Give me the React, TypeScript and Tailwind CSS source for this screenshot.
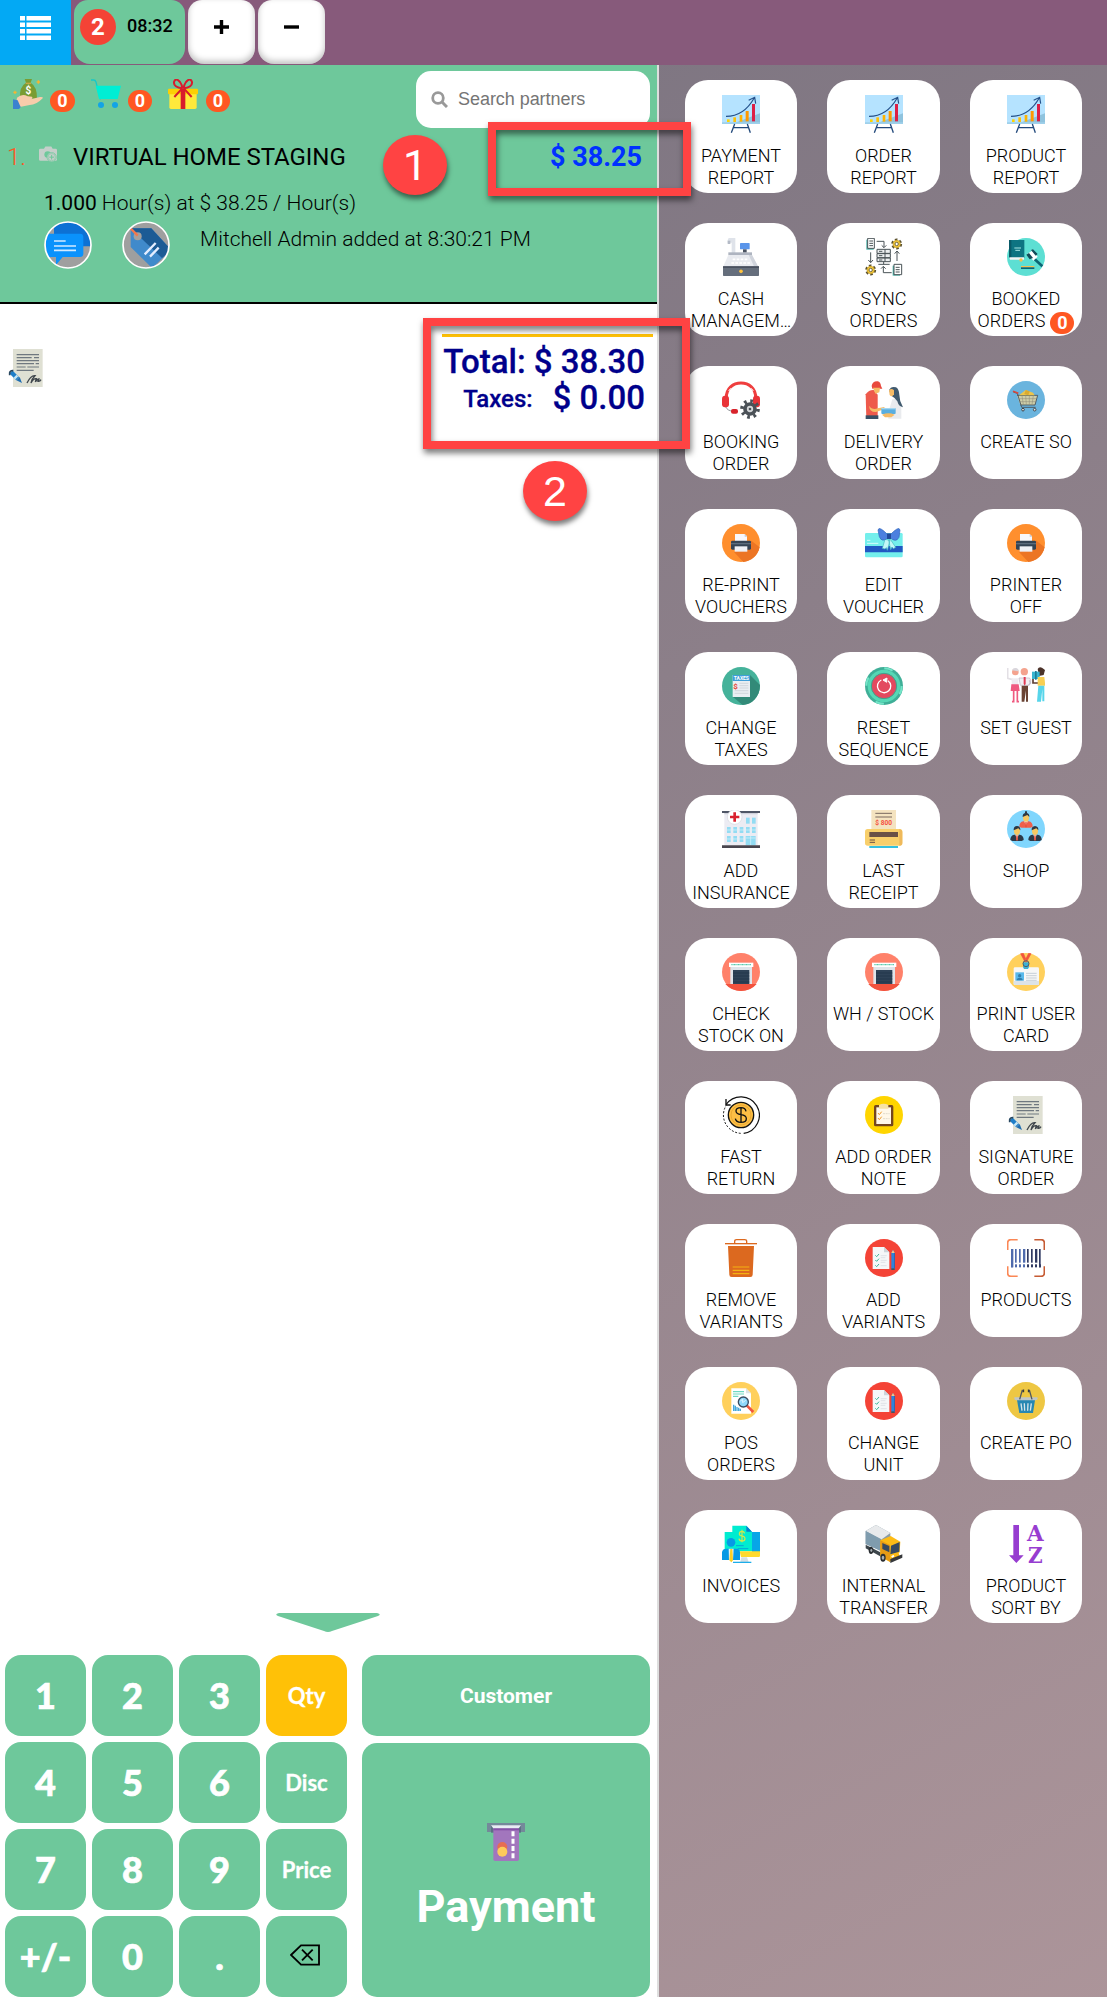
import React from "react";

type P = { children?: React.ReactNode; className?: string };

const Ico = ({ children, className = "h-[38px] w-[38px]" }: P) => (
  <svg viewBox="0 0 114 114" className={className} fill="none">
    {children}
  </svg>
);

const Chart = () => (
  <Ico>
    <rect x="0" y="0" width="114" height="87" fill="#b5e3ff" />
    <path d="M114 55v32H30z" fill="#8fc3de" />
    <path d="M0 82h114v5H0z" fill="#9fd0ea" />
    <rect x="15" y="73" width="8" height="8" fill="#ffd400" />
    <rect x="34" y="67" width="8" height="14" fill="#ffc107" />
    <rect x="53" y="60" width="8" height="20" fill="#ffb300" />
    <rect x="71" y="48" width="9" height="31" fill="#ff9800" />
    <rect x="90" y="27" width="9" height="52" fill="#dc1f45" />
    <path d="M12 64C50 64 78 42 97 8M80 16l18-9 3 19" stroke="#23508a" strokeWidth="3.5" />
    <path d="M38 87L28 113M76 87l9 26M34 98h46" stroke="#234a7c" strokeWidth="4" />
  </Ico>
);

const CashRegister = () => (
  <Ico>
    <path d="M20 0h20v50H29V14H17v-8z" fill="#dfe3ea" />
    <path d="M17 8h8v10h-8z" fill="#b4bac6" />
    <rect x="54" y="15" width="29" height="19" rx="2" fill="#5a95ea" />
    <rect x="63" y="34" width="11" height="10" fill="#4a5260" />
    <path d="M19 43h71v8H19z" fill="#aeb4c0" />
    <path d="M19 51h71l18 34H4z" fill="#e9ebf0" />
    <path d="M90 51l18 34H96L80 51z" fill="#d0d4dc" />
    <path d="M32 64h48M28 75h56" stroke="#fff" strokeWidth="5" strokeDasharray="8 4" />
    <rect x="3" y="85" width="108" height="29" rx="2" fill="#656e7c" />
    <path d="M3 85h108v5H3z" fill="#4a5260" />
    <circle cx="57" cy="100" r="5.500" fill="#ffc33d" />
  </Ico>
);

const Gear = ({ x, y }: { x: number; y: number }) => (
  <g transform={`translate(${x} ${y})`}>
    <circle r="12" stroke="#5b5230" strokeWidth="9" strokeDasharray="7 5.560" />
    <circle r="11" fill="#f3c93c" stroke="#c79b23" strokeWidth="2" />
    <circle r="5" fill="#fff" stroke="#5b5230" strokeWidth="2.500" />
  </g>
);

const Sync = () => (
  <Ico>
    <path d="M4 5h22v30H4z" fill="#49b3a8" />
    <path d="M8 1h20v30H8z" fill="#fff" stroke="#4a5357" strokeWidth="3" />
    <path d="M13 9h11M13 16h11M13 23h11" stroke="#4a5357" strokeWidth="3" />
    <path d="M83 83h22v30H83z" fill="#49b3a8" />
    <path d="M87 79h23v31H87z" fill="#fff" stroke="#4a5357" strokeWidth="3" />
    <path d="M92 88h12M92 95h12M92 102h12" stroke="#4a5357" strokeWidth="3" />
    <Gear x={95} y={18} />
    <Gear x={17} y={96} />
    <path d="M36 34h40v12H36zM36 47h40v12H36zM36 60h40v11H36z" fill="#eceff0" stroke="#4a5357" strokeWidth="3" />
    <path d="M42 40h10M42 53h10M42 66h10M60 34v37M56 71v8M40 79h34" stroke="#4a5357" strokeWidth="3" />
    <path d="M35 10h22v18M50 22l7 7 7-7M17 43v30M10 66l7 8 7-8M96 69V40M89 47l7-8 7 8M80 104H55V86M48 92l7-7 7 7" stroke="#4a5357" strokeWidth="3" />
  </Ico>
);

const Booked = () => (
  <Ico>
    <circle cx="57" cy="57" r="57" fill="#5ddfd3" />
    <path d="M6 6h46v54H6z" fill="#0d7482" />
    <path d="M6 6h7v54H6z" fill="#095a68" />
    <path d="M22 30h20M25 37h14" stroke="#a6e6e4" strokeWidth="3" />
    <path d="M7 58h44v7H9z" fill="#f2f5f5" />
    <circle cx="42" cy="66" r="5" fill="#f5bd4f" />
    <path d="M76 57l30 28" stroke="#0d6474" strokeWidth="8" />
    <path d="M61 48l14-10 17 18-13 12z" fill="#fff" />
    <path d="M58 50l10 14 10-4-12-15zM72 36l14 17 6-5-14-14z" fill="#134c59" />
    <path d="M42 84h40v4H42z" fill="#f5bd4f" />
    <path d="M42 88h40v5H42z" fill="#0d6474" />
  </Ico>
);

const Headset = () => (
  <Ico>
    <path d="M13 52C10-9 104-9 101 52" stroke="#ef3e3e" strokeWidth="9" />
    <path d="M20 30L26 22M94 30L88 22" stroke="#fff" strokeWidth="3" />
    <path d="M10 76c5 10 12 14 22 14" stroke="#8d9296" strokeWidth="3" />
    <rect x="0" y="44" width="21" height="35" rx="9" fill="#e93338" />
    <rect x="93" y="44" width="21" height="35" rx="9" fill="#e93338" />
    <rect x="27" y="84" width="21" height="14" rx="6" fill="#d8232b" />
    <circle cx="84" cy="84" r="24" stroke="#4b5157" strokeWidth="11" strokeDasharray="8 10.850" />
    <circle cx="84" cy="84" r="15" stroke="#4b5157" strokeWidth="11" fill="#d5d8da" />
    <circle cx="84" cy="84" r="4" fill="#4b5157" />
  </Ico>
);

const Delivery = () => (
  <Ico>
    <path d="M2 40q10-14 24-13l12 14v72H4z" fill="#ee5a4c" />
    <path d="M2 103h38v11H2z" fill="#395066" />
    <path d="M12 74q10 14 26 8l20-4 1 6-26 9Q14 94 12 74z" fill="#f6bb66" />
    <path d="M20 15q2-15 18-14 9 2 10 14l4 8H22z" fill="#e94a3e" />
    <path d="M24 20h21l-2 14-12 4z" fill="#f6bb66" />
    <path d="M82 55q24-8 27 18v40H70V94z" fill="#e9ebee" />
    <path d="M72 28q6-14 21-9 9 5 10 22 0 19 11 38-13-2-17-18-8-12-18-17z" fill="#405a6e" />
    <path d="M72 28q7-8 15 0v12q-7 10-13 2z" fill="#f6bb66" />
    <rect x="49" y="81" width="43" height="18" rx="3" fill="#59aee0" />
    <path d="M51 101q20-8 38 0l-10 8H60z" fill="#f6bb66" />
    <path d="M49 81h43v4H49z" fill="#a4d6ef" />
  </Ico>
);

const CreateSO = () => (
  <Ico>
    <circle cx="57" cy="57" r="57" fill="#6ab4de" />
    <path d="M30 43l10 29h44l8-29z" fill="#f0d796" fillOpacity=".75" />
    <path d="M19 33l12 4 13 42h42M30 43h62L84 72H40" stroke="#4b565e" strokeWidth="2.800" />
    <path d="M34 53h54M38 62h49M45 44l4 27M56 44l2 27M67 44v27M79 44l-4 27" stroke="#8d8a78" strokeWidth="1.600" />
    <path d="M36 43l20-16 22 8 5 8z" fill="#ecc54a" />
    <path d="M56 27l12 4-4 12-12-4z" fill="#d9aa31" />
    <path d="M18 31l16 6" stroke="#d6473b" strokeWidth="5" />
    <circle cx="48" cy="86" r="4" fill="#e6e6e6" stroke="#3e474e" strokeWidth="3" />
    <circle cx="83" cy="86" r="4" fill="#e6e6e6" stroke="#3e474e" strokeWidth="3" />
  </Ico>
);

const Printer = () => (
  <Ico>
    <circle cx="57" cy="57" r="57" fill="#ff8f2e" />
    <path d="M88 50l25 20c-5 25-26 42-49 44L36 84z" fill="#ec7524" />
    <path d="M39 30h29l7 7v18H39z" fill="#f8f8fb" />
    <path d="M68 30v8h8z" fill="#c4c9d2" />
    <rect x="27" y="50" width="60" height="27" rx="4" fill="#344454" />
    <path d="M27 57h60v4H27z" fill="#5b6c7c" />
    <path d="M38 67h38v16H38z" fill="#eef1f6" />
  </Ico>
);

const Voucher = () => (
  <Ico>
    <rect x="0" y="27" width="113" height="73" rx="4" fill="#74efec" />
    <path d="M0 66h113v19H0z" fill="#2158c2" />
    <path d="M6 49h10M6 58h34" stroke="#d8fbfb" strokeWidth="3" />
    <path d="M60 46l-8 27 8 2 4-4 3 8 8-30zM76 46l16 24-7 4-4-5-4 8-6-29z" fill="#c2f8f7" stroke="#41b6bf" strokeWidth="2" />
    <path d="M70 34Q42 4 39 18l4 20q8 20 27 2zM74 34q28-30 31-16l-3 22q-9 18-28 0z" fill="#4c80df" stroke="#3265ba" strokeWidth="2" />
    <path d="M66 28h12v17H66z" fill="#234a99" />
  </Ico>
);

const Taxes = () => (
  <Ico>
    <circle cx="57" cy="57" r="57" fill="#45b29a" />
    <path d="M84 24l30 30c0 34-24 60-52 60L32 89z" fill="#328a78" />
    <path d="M32 24h52v66H32z" fill="#e9eef2" />
    <path d="M32 24h52v18H32z" fill="#3f9fd8" />
    <text x="58" y="39" textAnchor="middle" fontSize="15" fontWeight="700" fill="#fff" fontFamily="Roboto, sans-serif">TAXES</text>
    <text x="34" y="65" fontSize="24" fontWeight="700" fill="#e44536" fontFamily="Roboto, sans-serif">$</text>
    <path d="M52 49h27M52 56h27M52 63h27M38 71h41M38 79h41" stroke="#c4ccd2" strokeWidth="2" />
  </Ico>
);

const Reset = () => (
  <Ico>
    <circle cx="57" cy="57" r="57" fill="#3fae97" />
    <circle cx="57" cy="57" r="49" fill="#55d8b5" />
    <circle cx="57" cy="57" r="53" stroke="#73e5c8" strokeWidth="6" strokeDasharray="26 57" />
    <circle cx="57" cy="57" r="38" fill="#e34a5f" stroke="#39a68f" strokeWidth="3" />
    <path d="M69 41a20 20 0 1 1-20-2" stroke="#fff" strokeWidth="4" />
    <path d="M54 39l12-6-1 13z" fill="#fff" stroke="#fff" strokeWidth="3" />
  </Ico>
);

const Guests = () => (
  <Ico>
    <path d="M2 3v31l15 4" stroke="#e3e0e5" strokeWidth="5" />
    <path d="M14 34h20v20H14z" fill="#eeebf0" />
    <circle cx="25" cy="15" r="10" fill="#f4a38e" />
    <path d="M15 10q3-8 11-7 9 1 9 10z" fill="#d9d6dc" />
    <path d="M13 52h22l3 20H11z" fill="#ef5a80" />
    <path d="M20 72v32h-5M31 72v32h5" stroke="#ef5a80" strokeWidth="5" />
    <circle cx="52" cy="14" r="11" fill="#f4a38e" />
    <path d="M36 33h32l4 9-8 13H40z" fill="#f1eff3" stroke="#bcb7c2" strokeWidth="2" />
    <path d="M50 30h6v20l-3 6-3-6z" fill="#e23b55" />
    <path d="M44 56h19v48h-6V70l-5 34h-8z" fill="#6a4334" />
    <path d="M67 40l4 8-7 8" stroke="#c7c2cc" strokeWidth="4" />
    <path d="M92 6q4-8 13-4l9 7-4 15-14 3z" fill="#4b3229" />
    <path d="M75 14h23v22H75z" fill="#37b5cf" />
    <path d="M84 12h5v26h-5z" fill="#1c7d98" />
    <path d="M78 36v12h15" stroke="#5c3d31" strokeWidth="5" />
    <path d="M92 30h20l3 26H92z" fill="#f8cf53" />
    <path d="M94 56h18v47h-6V66l-4 38H90z" fill="#57d5ea" />
  </Ico>
);

const Hospital = () => (
  <Ico>
    <path d="M7 8h100v98H7z" fill="#ececf3" />
    <path d="M0 3h114v6H0z" fill="#4f5666" />
    <path d="M7 9h100v4H7z" fill="#cfd1db" />
    <g fill="#93dcf3">
      {[72, 90].map((x) => <rect key={x} x={x} y="23" width="11" height="18" />)}
      {[15, 34, 53, 72, 90].map((x) => <rect key={x} x={x} y="51" width="11" height="18" />)}
      {[15, 34, 53].map((x) => <rect key={x} x={x} y="78" width="11" height="18" />)}
      <path d="M71 78h30v28H71z" />
    </g>
    <path d="M86 78v28M71 84h30M14 60h88M14 87h52" stroke="#ddf5fb" strokeWidth="2" />
    <circle cx="38" cy="21" r="22" fill="#fff" stroke="#d4d7de" strokeWidth="2" />
    <path d="M38 7v28M24 21h28" stroke="#d9202e" strokeWidth="8" />
    <path d="M0 106h114v8H0z" fill="#48454e" />
  </Ico>
);

const Receipt = () => (
  <Ico>
    <path d="M19 0h74v66H19z" fill="#f4e3c0" />
    <path d="M31 10h50M31 21h50" stroke="#7a695f" strokeWidth="3" />
    <text x="56" y="46" textAnchor="middle" fontSize="23" fontWeight="700" textLength="50" lengthAdjust="spacingAndGlyphs" fill="#f4513d" fontFamily="Roboto, sans-serif">$ 800</text>
    <rect x="0" y="57" width="112" height="50" rx="8" fill="#f8cf6b" />
    <path d="M103 57q9 2 9 8v34q0 8-9 8z" fill="#efb95b" />
    <path d="M13 66h86v15H13z" fill="#6a5146" />
    <path d="M14 90h16M14 97h16" stroke="#6a5146" strokeWidth="3" />
    <path d="M13 108h86v6H13z" fill="#34c0df" />
  </Ico>
);

const Person = ({ x, y, c }: { x: number; y: number; c: string }) => (
  <g transform={`translate(${x} ${y})`}>
    <path d="M-20 38q0-14 12-16h16q12 2 12 16l-6 3h-28z" fill={c} />
    <path d="M-5 22l5 14 5-14z" fill="#fff" />
    <path d="M-2 24h4l1 13-3 4-3-4z" fill="#e8543f" />
    <ellipse cx="0" cy="11" rx="9" ry="12" fill="#f6c863" />
    <path d="M-10 9Q-11-3 0-4 11-3 10 9L4 3z" fill="#2d3844" />
  </g>
);

const Shop = () => (
  <Ico>
    <circle cx="57" cy="57" r="57" fill="#80d6fd" />
    <Person x={57} y={12} c="#ef5f4b" />
    <path d="M54 4h6v8h-6z" fill="#2d3844" />
    <Person x={30} y={52} c="#2c3a49" />
    <Person x={84} y={52} c="#2c3a49" />
  </Ico>
);

const Warehouse = () => (
  <Ico>
    <circle cx="57" cy="57" r="57" fill="#ff816a" />
    <path d="M10 93h94q-18 21-47 21t-47-21z" fill="#f2523d" />
    <path d="M25 38h65v55H25z" fill="#dfe4ea" />
    <path d="M21 29h73v13H21z" fill="#fff" />
    <path d="M28 35h60" stroke="#5bc9ae" strokeWidth="4" strokeDasharray="3 1" />
    <path d="M33 51h49v42H33z" fill="#2e4257" />
    <path d="M33 60h49M33 69h49M33 78h49M33 87h49" stroke="#203246" strokeWidth="2" />
  </Ico>
);

const UserCard = () => (
  <Ico>
    <circle cx="57" cy="57" r="57" fill="#ffd05c" />
    <path d="M41 2l13 25 5-3L49 1zM72 2L58 28l-5-3L65 1z" fill="#f1553e" stroke="#f1553e" strokeWidth="2" />
    <rect x="20" y="43" width="76" height="53" rx="4" fill="#f7f7f7" />
    <path d="M20 84h76v8q0 4-4 4H24q-4 0-4-4z" fill="#dce3e7" />
    <path d="M48 28h18v14l-3 6H51l-3-6z" fill="#3bb1d5" />
    <circle cx="57" cy="32" r="9" stroke="#515d68" strokeWidth="3" />
    <path d="M25 58h26v25H25z" fill="#59b9eb" />
    <circle cx="38" cy="68" r="5" fill="#317fad" />
    <path d="M29 82q0-8 9-8t9 8z" fill="#317fad" />
    <path d="M57 61h32M57 68h32M57 75h32M57 82h32" stroke="#bdc7cf" strokeWidth="2.500" />
  </Ico>
);

const FastReturn = () => (
  <Ico>
    <path d="M56 112a55 55 0 0 1-44-83" stroke="#111" strokeWidth="3" strokeDasharray="6 5" />
    <path d="M12 26a55 55 0 1 1 53 86" stroke="#111" strokeWidth="3.500" />
    <path d="M12 9v18h14" stroke="#111" strokeWidth="4" />
    <circle cx="57" cy="57" r="38" fill="#fdbf45" stroke="#111" strokeWidth="4" />
    <circle cx="57" cy="57" r="30" stroke="#e29d28" strokeWidth="2" />
    <path d="M72 46q-2-11-15-11-15 0-15 10 0 9 15 11 16 2 16 12 0 11-16 11-15 0-17-11M57 35v44" stroke="#111" strokeWidth="4" />
  </Ico>
);

const OrderNote = () => (
  <Ico>
    <circle cx="57" cy="57" r="57" fill="#ffd500" />
    <rect x="27" y="27" width="58" height="64" rx="5" fill="#74461f" />
    <path d="M34 34h44v50H34z" fill="#fff8ea" />
    <path d="M42 27q14-8 28 0v11H42z" fill="#f7e2a4" />
    <path d="M39 51l4 5 7-9M39 66l4 5 7-9" stroke="#f09a28" strokeWidth="3" />
    <path d="M54 53h20M54 68h20" stroke="#e2dccd" strokeWidth="3" strokeDasharray="6 2" />
  </Ico>
);

const Signature = () => (
  <Ico>
    <path d="M18 0h89v114H18z" fill="#dfe0d3" />
    <path d="M29 17h67M29 26h45M81 26h15M29 35h67M29 44h52M86 44h10M29 54h27M61 54h35M29 64h51" stroke="#6f7880" strokeWidth="3.500" />
    <path d="M12 69l20 20" stroke="#1f7ec8" strokeWidth="13" />
    <path d="M24 82l5 5" stroke="#c4e6f7" strokeWidth="13" />
    <path d="M38 84l-10 10 17 8z" fill="#1f6db0" />
    <path d="M8 79V71q2-7 11-6" stroke="#294861" strokeWidth="5" />
    <path d="M60 102q12-24 24-22-10 9-12 22 8-15 16-13l-3 10q6-10 11-9l-3 7q6 1 9-5" stroke="#3f464c" strokeWidth="4" />
  </Ico>
);

const Trash = () => (
  <Ico>
    <path d="M38 13V7q0-5 6-5h24q6 0 6 5v6" stroke="#dc691f" strokeWidth="4" />
    <path d="M9 14h96" stroke="#dc691f" strokeWidth="4" />
    <path d="M18 21h78l-4 86q0 7-7 7H29q-7 0-7-7z" fill="#dc691f" />
    <path d="M32 84h50M32 94h50M32 104h50" stroke="#f3b112" strokeWidth="3.500" />
  </Ico>
);

const Variants = () => (
  <Ico>
    <circle cx="57" cy="57" r="57" fill="#f44336" />
    <path d="M23 24h34l16 16v50H23z" fill="#f5f7f8" />
    <path d="M57 24l16 16H57z" fill="#cdd5da" />
    <path d="M31 49l4 4 7-8M31 63l4 4 7-8M31 79l4 4 7-8" stroke="#3bb497" strokeWidth="3" />
    <path d="M47 50h18M47 56h14M47 64h18M47 70h14M47 80h18" stroke="#d3dade" strokeWidth="2" />
    <path d="M79 42l5-9 5 9v50H79z" fill="#2e83db" />
    <path d="M79 42l5-9 5 9z" fill="#f6c886" />
    <path d="M79 88h10v5H79z" fill="#4b5157" />
    <path d="M87 42h2v46h-2z" fill="#1d5faf" />
  </Ico>
);

const Barcode = () => (
  <Ico>
    <path d="M2 33V12Q2 2 12 2h20M2 82v20q0 10 10 10h20" stroke="#fb8755" strokeWidth="5" />
    <path d="M82 2h20q10 0 10 10v21M112 82v20q0 10-10 10H82" stroke="#c65b33" strokeWidth="5" />
    {[12, 24, 36, 48, 60, 72, 84, 96].map((x, i) => (
      <g key={x}>
        <rect x={x} y="30" width={i % 3 ? 5 : 7} height={i === 0 || i === 7 ? 55 : 41} fill={i < 4 ? "#4f6bad" : "#303a62"} />
        <rect x={x} y="76" width="6" height="9" fill={i < 4 ? "#4f6bad" : "#303a62"} />
      </g>
    ))}
  </Ico>
);

const PosOrders = () => (
  <Ico>
    <circle cx="57" cy="57" r="57" fill="#ffd05c" />
    <path d="M28 19h44l15 15v61H28z" fill="#fff" />
    <path d="M72 19v15h15z" fill="#dce3e7" />
    <path d="M33 29h33M33 36h33M33 43h16" stroke="#6fd9c2" strokeWidth="3.500" />
    <path d="M35 87V68M40 87V71M45 87V75M50 87V77M55 87V80" stroke="#45a8dc" strokeWidth="4" />
    <path d="M74 70l20 20" stroke="#f1563f" strokeWidth="8" />
    <circle cx="64" cy="60" r="15" fill="#8fd9fb" stroke="#3b4c60" strokeWidth="4" />
    <path d="M55 57l7-5v10l9-7" stroke="#e0f5fe" strokeWidth="3" />
  </Ico>
);

const Basket = () => (
  <Ico>
    <circle cx="57" cy="57" r="57" fill="#eec743" />
    <path d="M30 54h54l-6 39H37z" fill="#2687b2" />
    <path d="M22 46h69q3 8-5 9H28q-7-1-6-9z" fill="#bec6c9" />
    <path d="M38 52l8-28M75 52l-8-28" stroke="#53595e" strokeWidth="4" />
    <path d="M47 25h2v6M67 25h-2v6" stroke="#35393d" strokeWidth="5" />
    <path d="M42 64l3 22M52 64l1 22M63 64l-1 22M73 64l-3 22" stroke="#d7e5e9" strokeWidth="4" />
  </Ico>
);

const Invoices = () => (
  <Ico>
    <path d="M90 21h24v62H90z" fill="#07a6e8" />
    <path d="M8 21h29v62H8z" fill="#00ecd0" />
    <path d="M31 2h42l17 18v59H31z" fill="#00ecd0" />
    <path d="M73 2l17 18H73z" fill="#087fd1" />
    <path d="M53 79h61v14q0 3-4 3H57z" fill="#ffda2d" />
    <path d="M58 97h17l5 14H55z" fill="#d5dfe4" />
    <path d="M33 112h55" stroke="#07a6e8" strokeWidth="3.500" />
    <path d="M68 25q-2-6-8-6-8 0-8 7 0 6 8 7 9 1 9 8 0 7-9 7-8 0-9-7M60 14v38" stroke="#d3e64b" strokeWidth="3.500" />
    <path d="M42 62h23M47 71h32" stroke="#05a5d9" strokeWidth="3" />
    <circle cx="27" cy="52" r="13" fill="#0799e5" />
    <path d="M0 105V81q2-10 13-10h30q10 0 11 10v24z" fill="#0799e5" />
    <path d="M20 71h15l-2 34H21z" fill="#e5f1f2" />
    <path d="M25 72h6l2 34-5 6-6-6z" fill="#fccf24" />
  </Ico>
);

const Truck = () => (
  <Ico>
    <path d="M2 18L33 0l43 24v34L46 76 2 57z" fill="#8a9ca8" />
    <path d="M2 18L33 0l43 24-28 20z" fill="#e8eaec" />
    <path d="M2 18l46 24v37L2 57z" fill="#7f9cae" />
    <path d="M2 59l60 31-3 11L2 70z" fill="#3d464c" />
    <path d="M46 46l31-13 29 17-3 45-29 15-28-15z" fill="#fdbb15" />
    <path d="M46 46l29 14v51L46 91z" fill="#e79b16" />
    <path d="M52 54l21 9v19L52 72zM78 62l26-11-1 29-27 8z" fill="#374a60" />
    <path d="M76 102l36-14v10l-36 16z" fill="#36393c" />
    <path d="M80 96l7-4M102 87l7-3" stroke="#fff" strokeWidth="6" />
    <ellipse cx="18" cy="76" rx="7" ry="11" fill="#292d31" />
    <ellipse cx="54" cy="98" rx="8" ry="12" fill="#292d31" />
    <ellipse cx="19" cy="76" rx="3" ry="5" fill="#a9b1b6" />
    <ellipse cx="54" cy="98" rx="4" ry="6" fill="#a9b1b6" />
  </Ico>
);

const SortAZ = () => (
  <Ico>
    <path d="M19 0h17v91h14L28 114 6 91h13z" fill="#973dd0" />
    <text x="85" y="49" textAnchor="middle" fontSize="66" fontWeight="700" textLength="50" lengthAdjust="spacingAndGlyphs" fill="#973dd0" fontFamily="DejaVu Serif, serif">A</text>
    <text x="85" y="114" textAnchor="middle" fontSize="66" fontWeight="700" textLength="44" lengthAdjust="spacingAndGlyphs" fill="#973dd0" fontFamily="DejaVu Serif, serif">Z</text>
  </Ico>
);

const TILES: [() => React.ReactElement, string[], boolean?][] = [
  [Chart, ["PAYMENT", "REPORT"]],
  [Chart, ["ORDER", "REPORT"]],
  [Chart, ["PRODUCT", "REPORT"]],
  [CashRegister, ["CASH", "MANAGEM…"]],
  [Sync, ["SYNC", "ORDERS"]],
  [Booked, ["BOOKED", "ORDERS"], true],
  [Headset, ["BOOKING", "ORDER"]],
  [Delivery, ["DELIVERY", "ORDER"]],
  [CreateSO, ["CREATE SO"]],
  [Printer, ["RE-PRINT", "VOUCHERS"]],
  [Voucher, ["EDIT", "VOUCHER"]],
  [Printer, ["PRINTER", "OFF"]],
  [Taxes, ["CHANGE", "TAXES"]],
  [Reset, ["RESET", "SEQUENCE"]],
  [Guests, ["SET GUEST"]],
  [Hospital, ["ADD", "INSURANCE"]],
  [Receipt, ["LAST", "RECEIPT"]],
  [Shop, ["SHOP"]],
  [Warehouse, ["CHECK", "STOCK ON"]],
  [Warehouse, ["WH / STOCK"]],
  [UserCard, ["PRINT USER", "CARD"]],
  [FastReturn, ["FAST", "RETURN"]],
  [OrderNote, ["ADD ORDER", "NOTE"]],
  [Signature, ["SIGNATURE", "ORDER"]],
  [Trash, ["REMOVE", "VARIANTS"]],
  [Variants, ["ADD", "VARIANTS"]],
  [Barcode, ["PRODUCTS"]],
  [PosOrders, ["POS", "ORDERS"]],
  [Variants, ["CHANGE", "UNIT"]],
  [Basket, ["CREATE PO"]],
  [Invoices, ["INVOICES"]],
  [Truck, ["INTERNAL", "TRANSFER"]],
  [SortAZ, ["PRODUCT", "SORT BY"]],
];

const Badge = ({ className = "" }: P) => (
  <span className={`inline-flex h-[22px] items-center justify-center rounded-full bg-[#ff5722] text-[18px] leading-none font-bold text-white ${className}`}>0</span>
);

const MoneyHand = () => (
  <svg viewBox="0 0 90 90" className="h-[30px] w-[30px]">
    <path d="M35 0h22l-4 11q20 12 19 48H21Q18 23 39 11z" fill="#7a9c32" />
    <path d="M38 11h16v4H38z" fill="#c6a544" />
    <text x="46" y="46" textAnchor="middle" fontSize="30" fontWeight="700" fill="#fff" fontFamily="Roboto, sans-serif">$</text>
    <path d="M12 56q16-14 32-4l13 1q4 6-4 8l28-7q11-1 8 4Q70 78 50 78L20 84 10 72z" fill="#f8ccab" />
    <path d="M0 61l14 3 9 20-5 6H0z" fill="#3c82cf" />
    <path d="M76 4v10M71 9h10M6 35v10M1 40h10" stroke="#f6b530" strokeWidth="4" />
  </svg>
);

const CartIcon = () => (
  <svg viewBox="0 0 90 90" className="h-[30px] w-[30px]">
    <path d="M0 3h8q5 0 7 6l13 52" fill="none" stroke="#16c8c8" strokeWidth="4" />
    <path d="M14 20h76L80 60H24z" fill="#00eed4" />
    <circle cx="30" cy="78" r="9" fill="#12a4e6" />
    <circle cx="72" cy="78" r="9" fill="#12a4e6" />
  </svg>
);

const GiftIcon = () => (
  <svg viewBox="0 0 90 90" className="h-[30px] w-[30px]">
    <path d="M4 44h82v41q0 5-5 5H9q-5 0-5-5z" fill="#ffe93b" />
    <rect x="0" y="29" width="90" height="17" rx="3" fill="#fccf05" />
    <path d="M38 29h14v61H38z" fill="#d81b2c" />
    <path d="M43 28Q16 24 18 9q5-15 18 0 7 9 7 20M47 28q27-4 25-19-5-15-18 0-7 9-7 20M42 29L19 54M48 29l23 25" fill="none" stroke="#d81b2c" strokeWidth="6" />
  </svg>
);

const KEYS = ["1", "2", "3", "Qty", "4", "5", "6", "Disc", "7", "8", "9", "Price", "+/-", "0", ".", "back"];

const Backspace = () => (
  <svg viewBox="0 0 90 64" className="mr-1 mb-0.5 h-[22px] w-[30px]" fill="none" stroke="#000" strokeWidth="5.500">
    <path d="M3 32L33 3h54v58H33zM36 16l32 32M68 16L36 48" />
  </svg>
);

const Key = ({ k }: { k: string }) => (
  <button
    className={`flex h-[81px] w-[81px] items-center justify-center rounded-[16px] pb-px font-[Lato,sans-serif] text-white ${k === "Qty" ? "bg-[#ffc107]" : "bg-[#6ec89b]"} ${k.length > 2 && k !== "+/-" ? "text-[22px] font-bold [-webkit-text-stroke:0.3px_white]" : "text-[36px] font-black [-webkit-text-stroke:0.7px_white]"}`}
  >
    {k === "back" ? <Backspace /> : k}
  </button>
);

const Callout = ({ n, className = "" }: { n: string; className?: string }) => (
  <div className={`absolute flex h-[60px] w-[64px] items-center justify-center rounded-[50%] bg-[#ff4343] text-[43px] leading-none text-white shadow-[1px_4px_5px_rgba(0,0,0,0.5)] ${className}`}>
    {n}
  </div>
);

export default function App() {
  return (
    <div className="relative flex h-[1997px] w-[1107px] flex-col overflow-hidden bg-white font-[Roboto,sans-serif] text-black">
      <header className="flex h-[65px] shrink-0 bg-[#875a7b]">
        <button className="flex w-[71px] justify-center bg-[#03a9f4] pt-4">
          <svg viewBox="0 0 31 24" className="h-6 w-[31px]" fill="#fff">
            {[0, 6.5, 13, 19.5].map((y) => (
              <g key={y}>
                <rect x="0" y={y} width="5" height="4.500" />
                <rect x="6.500" y={y} width="24.500" height="4.500" />
              </g>
            ))}
          </svg>
        </button>
        <div className="ml-[3px] flex h-16 w-[111px] rounded-b-[16px] rounded-t-[14px] bg-[#6ec89b] pl-1.5">
          <span className="mt-[9px] flex h-9 w-9 items-center justify-center rounded-full bg-[#f44336] text-[24px] font-bold text-white">2</span>
          <span className="mt-[15px] ml-[11px] text-[18px] leading-[22px] font-medium">08:32</span>
        </div>
        {["+", "−"].map((s) => (
          <button key={s} className="ml-[3px] flex h-16 w-[67px] justify-center rounded-b-[16px] rounded-t-[14px] bg-white pt-[15px] shadow-[inset_0_-3px_6px_rgba(0,0,0,0.25)]">
            <svg viewBox="0 0 15 24" className="h-6 w-[15px]" stroke="#000" strokeWidth="3.400">
              <path d={s === "+" ? "M0 12h15M7.500 5v14" : "M0 12h15"} />
            </svg>
          </button>
        ))}
      </header>

      <div className="flex min-h-0 flex-1">
        <main className="flex w-[659px] flex-col border-r-2 border-[#dedede] bg-white">
          <section className="h-[239px] shrink-0 border-b-2 border-black bg-[#6ec89b]">
            <div className="flex h-[76px] pl-[13px]">
              <div className="flex pt-3.5"><MoneyHand /><Badge className="mt-[11px] ml-[7px] w-[25px]" /></div>
              <div className="ml-4 flex pt-3.5"><CartIcon /><Badge className="mt-[11px] ml-[7px] w-6" /></div>
              <div className="ml-4 flex pt-3.5"><GiftIcon /><Badge className="mt-[11px] ml-2 w-6" /></div>
              <label className="mt-1.5 mr-[7px] ml-auto flex h-[57px] w-[234px] items-center rounded-[15px] bg-white pl-[15px] font-['Liberation_Sans',sans-serif] text-[18px] tracking-[-0.05px] text-[#757575]">
                <svg viewBox="0 0 17 17" className="mr-2.5 h-[17px] w-[17px]" fill="none" stroke="#999">
                  <circle cx="7" cy="7" r="5.300" strokeWidth="2.800" />
                  <path d="M10.500 10.500l5.500 5.500" strokeWidth="3" />
                </svg>
                Search partners
              </label>
            </div>
            <div className="flex h-8 items-center pr-[15px] pl-[7px] text-[24px]">
              <span className="w-[32px] font-light text-[#ff5722]">1.</span>
              <svg viewBox="0 0 54 50" className="-mt-1.5 mr-4 h-[17px] w-[18px]">
                <path d="M4 8h11l4-7h18l4 7h9q4 0 4 4v28q0 4-4 4H4q-4 0-4-4V12q0-4 4-4z" fill="#c5cfca" />
                <circle cx="26" cy="25" r="10" fill="#6ec89b" />
                <circle cx="38" cy="33" r="14" fill="#c5cfca" stroke="#6ec89b" strokeWidth="2" />
                <circle cx="38" cy="33" r="11" fill="none" stroke="#6ec89b" strokeWidth="1.500" />
                <path d="M38 26v14M31 33h14" stroke="#6ec89b" strokeWidth="3" />
              </svg>
              <span className="tracking-[-0.04px]">VIRTUAL HOME STAGING</span>
              <span className="ml-auto text-[27px] font-bold text-[#0031ff]">$ 38.25</span>
            </div>
            <p className="mt-[19px] pl-[44px] text-[21px] leading-[22px] font-light"><b>1.000</b> Hour(s) at $ 38.25 / Hour(s)</p>
            <div className="mt-[7px] flex pl-[44px]">
              <svg viewBox="0 0 144 144" className="h-12 w-12">
                <defs><clipPath id="disc"><circle cx="72" cy="72" r="68" /></clipPath></defs>
                <circle cx="72" cy="72" r="70" fill="#9f9f9f" />
                <g clipPath="url(#disc)">
                  <path d="M30 0h114v76H30z" fill="#0d71d4" />
                  <path d="M16 38h92q10 0 10 10v50q0 10-10 10H56l-20 24v-24H16Q6 108 6 98V48q0-10 10-10z" fill="#0a92fc" />
                  <path d="M30 60h35M30 75h66M30 88h66" stroke="#d3eaff" strokeWidth="5" />
                </g>
                <circle cx="72" cy="72" r="69" fill="none" stroke="#fff" strokeWidth="5" />
              </svg>
              <svg viewBox="0 0 144 144" className="ml-[30px] h-12 w-12">
                <circle cx="72" cy="72" r="70" fill="#9f9f9f" />
                <g clipPath="url(#disc)">
                  <path d="M26 22h62l60 65-58 54L26 78z" fill="#408acb" />
                  <path d="M26 22h62l60 65-28 24z" fill="#1c5b95" />
                  <circle cx="47" cy="46" r="12" fill="#a4a09d" />
                  <path d="M22 18l25 26" stroke="#f3764b" strokeWidth="7" />
                  <path d="M68 100l33-34M84 107l26-27" stroke="#e4edff" strokeWidth="7" />
                </g>
                <circle cx="72" cy="72" r="69" fill="none" stroke="#fff" strokeWidth="5" />
              </svg>
              <span className="mt-[7px] ml-[30px] text-[21px] leading-[22px] font-light">Mitchell Admin added at 8:30:21 PM</span>
            </div>
          </section>

          <section className="flex justify-between pt-[30px] pr-1 pl-[7px] font-medium text-[#00008b]">
            <div className="pt-[15px]"><Signature /></div>
            <div className="w-[211px] border-t-[3px] border-[#ffc107] pt-[7px] pr-2 text-right text-[33px] leading-9 [-webkit-text-stroke:0.3px_#00008b]">
              <div className="whitespace-nowrap">Total: $ 38.30</div>
              <div className="whitespace-nowrap"><span className="mr-5 inline-block align-[2px] text-[24px] leading-6">Taxes:</span>$ 0.00</div>
            </div>
          </section>

          <section className="mt-auto">
            <svg viewBox="0 0 104 20" className="mb-[22px] ml-[276px] h-5 w-[104px]" fill="#6ec89b">
              <path d="M3 0h98q5 1 1 3L56 18q-4 2-8 0L2 3q-4-2 1-3z" />
            </svg>
            <div className="flex pl-[5px]">
              <div className="grid grid-cols-[repeat(4,81px)] gap-1.5">
                {KEYS.map((k) => <Key key={k} k={k} />)}
              </div>
              <div className="ml-[15px] flex w-[288px] flex-col gap-[7px] font-bold text-white">
                <button className="h-[81px] rounded-[15px] bg-[#6ec89b] pt-0.5 text-[21px]">Customer</button>
                <button className="flex flex-1 flex-col items-center rounded-[15px] bg-[#6ec89b] pt-20">
                  <Ico>
                    <path d="M0 0h114v27H0z" fill="#74899a" />
                    <path d="M12 7h90v22H12z" fill="#5c7185" />
                    <path d="M12 7h90l-8 10H20z" fill="#e8edf4" />
                    <path d="M19 17h77v92q0 5-5 5H24q-5 0-5-5z" fill="#a276bd" />
                    <path d="M19 16h77v6H19z" fill="#8651a8" />
                    <circle cx="46" cy="72" r="15" fill="#e76d53" />
                    <circle cx="46" cy="86" r="15" fill="#fecb5b" />
                    <path d="M78 25v82" stroke="#fff" strokeWidth="9" strokeDasharray="15 7" />
                  </Ico>
                  <span className="mt-[19px] text-[45px] leading-[53px]">Payment</span>
                </button>
              </div>
            </div>
          </section>
        </main>

        <aside className="flex-1 bg-[linear-gradient(to_right_bottom,#77717e,#c9a8a9)] bg-[length:3840px_1997px] bg-[position:-659px_-65px] bg-no-repeat pt-[15px] pl-[26px]">
          <div className="grid grid-cols-[112px_113px_112px] gap-[30px]">
            {TILES.map(([Icon, lines, badge], i) => (
              <button key={i} className="flex h-[113px] flex-col items-center rounded-[23px] bg-white pt-[15px] text-[18px] leading-[22px] font-light">
                <Icon />
                <span className="mt-3 whitespace-nowrap">{lines[0]}</span>
                {lines[1] && (
                  <span className="flex items-center whitespace-nowrap">
                    {lines[1]}
                    {badge && <Badge className="ml-[5px] w-6 translate-y-0.5" />}
                  </span>
                )}
              </button>
            ))}
          </div>
        </aside>
      </div>

      <div className="absolute top-[122px] left-[488px] h-[74px] w-[203px] border-8 border-[#ff4343] drop-shadow-[1px_4px_3px_rgba(0,0,0,0.55)]" />
      <div className="absolute top-[318px] left-[423px] h-[131px] w-[267px] border-8 border-[#ff4343] drop-shadow-[1px_4px_3px_rgba(0,0,0,0.55)]" />
      <Callout n="1" className="top-[135px] left-[383px] font-[Roboto,sans-serif]" />
      <Callout n="2" className="top-[461px] left-[523px] font-['Liberation_Sans',sans-serif]" />
    </div>
  );
}
